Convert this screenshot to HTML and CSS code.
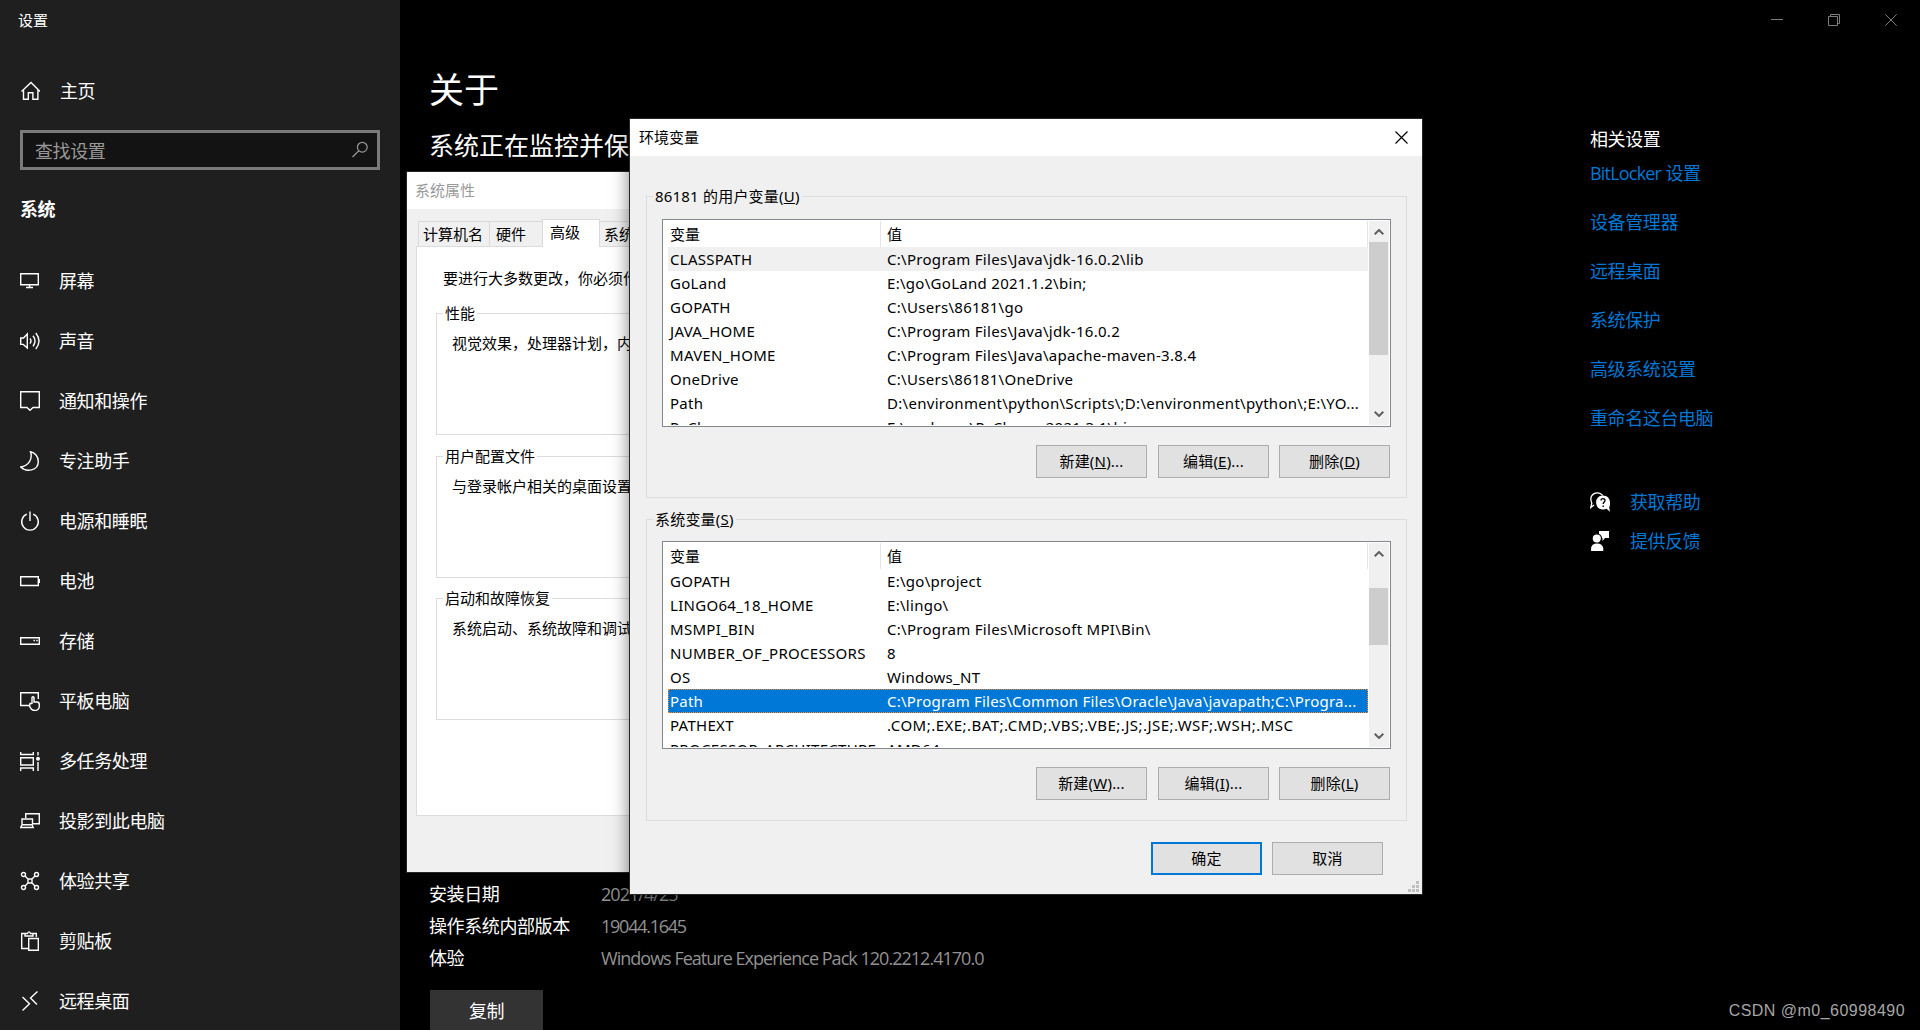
FILE: index.html
```html
<!DOCTYPE html>
<html lang="zh-CN">
<head>
  <meta charset="UTF-8">
  <title>设置</title>
  <link rel="stylesheet" href="styles.css">
</head>
<body>
  <div class="settings">
    <aside class="sidebar">
      <div class="app-title">设置</div>
      <a class="nav-item home">
        <svg class="icon" viewBox="0 0 20 20"><path d="M1.5 10.5L11 1.5l9 9M3.5 9v9.3h4.8v-6.6h4.6v6.6h5V9"/></svg>
        <span>主页</span>
      </a>
      <div class="search">
        <span>查找设置</span>
        <svg class="search-icon" viewBox="0 0 18 18"><circle cx="11.3" cy="6.2" r="4.9"/><path d="M7.8 9.8L1.5 16"/></svg>
      </div>
      <h3>系统</h3>
      <nav>
        <a class="nav-item">
          <svg class="icon" viewBox="0 0 20 20"><path d="M.7 2.7h17.6v11.1H.7zM9.5 14v2.5M6 16.5h7"/></svg>
          <span>屏幕</span>
        </a>
        <a class="nav-item">
          <svg class="icon" viewBox="0 0 20 20"><path d="M.7 7v6.4h2.6l4 3.6V3L3.500 7zM10 7.500q2 2.500 0 5.200M13 4.800q4 5.200 0 10.500M15.800 2q6.400 8 0 16"/></svg>
          <span>声音</span>
        </a>
        <a class="nav-item">
          <svg class="icon" viewBox="0 0 20 20"><path d="M.7.800h18.600v15.700h-6.300l-3 2.800-3-2.800H.7z"/></svg>
          <span>通知和操作</span>
        </a>
        <a class="nav-item">
          <svg class="icon" viewBox="0 0 20 20"><path d="M10.500.800c2.500 7-2 14-9.800 15.200 5.500 5.500 17.600 4 17.600-5.500 0-5-3.500-9-7.800-9.700z"/></svg>
          <span>专注助手</span>
        </a>
        <a class="nav-item">
          <svg class="icon" viewBox="0 0 20 20"><path d="M10 .5V10M6.800 3.200a8.300 8.300 0 1 0 6.400 0"/></svg>
          <span>电源和睡眠</span>
        </a>
        <a class="nav-item">
          <svg class="icon" viewBox="0 0 20 20"><path d="M.7 5.700h17.600v8.800H.7zM19.500 8v4"/></svg>
          <span>电池</span>
        </a>
        <a class="nav-item">
          <svg class="icon" viewBox="0 0 20 20"><path d="M.7 6.700h18.600v6.600H.7zM13.500 9.500H15M16.200 9.500h1.500"/></svg>
          <span>存储</span>
        </a>
        <a class="nav-item">
          <svg class="icon" viewBox="0 0 20 20"><path d="M9 14.500H.7V1.700h17.600V8M12 13V6.500q1-1.500 2 0V11h3q2.300 0 2.300 2.500v2q-.5 4-4.500 4-3.500 0-5.300-4.500l.5-2.500h2"/></svg>
          <span>平板电脑</span>
        </a>
        <a class="nav-item">
          <svg class="icon" viewBox="0 0 20 20"><path d="M.7 1v2.500h12.600V1M.7 6.700h12.600v7.300H.7zM.7 20v-3h12.600v3M18 1v3.500M18 11v9"/><circle class="fill" cx="18" cy="7.800" r="2"/></svg>
          <span>多任务处理</span>
        </a>
        <a class="nav-item">
          <svg class="icon" viewBox="0 0 20 20"><path d="M5.700 7V2.700h13.600v10H13M2 13.500V8h10.500v5.500M.7 16.500l1.300-2.700h10l1.200 2.700z"/></svg>
          <span>投影到此电脑</span>
        </a>
        <a class="nav-item">
          <svg class="icon" viewBox="0 0 20 20"><circle cx="3.500" cy="3.500" r="2"/><circle cx="16.500" cy="3.500" r="2"/><circle cx="3.500" cy="16.500" r="2"/><circle cx="16.500" cy="16.500" r="2"/><path d="M8 8h4v4H8zM5 5l3 3M15 5l-3 3M5 15l3-3M15 15l-3-3"/></svg>
          <span>体验共享</span>
        </a>
        <a class="nav-item">
          <svg class="icon" viewBox="0 0 20 20"><path d="M8 17.500H1.700v-15H5.500M12.500 2.500h3.800V6M5 5V2.500h2.500Q9-.800 10.500 2.500H13V5zM8.700 7.500h9.600v11.800H8.700z"/></svg>
          <span>剪贴板</span>
        </a>
        <a class="nav-item">
          <svg class="icon" viewBox="0 0 20 20"><path d="M2.500 6l7 6.700-7 6.800M17.500.500l-7 6.500 6.500 6.500"/></svg>
          <span>远程桌面</span>
        </a>
      </nav>
    </aside>

    <main class="about">
      <h1>关于</h1>
      <h2>系统正在监控并保</h2>
      <dl class="specs">
        <dt>安装日期</dt><dd class="date">2021/4/25</dd>
        <dt>操作系统内部版本</dt><dd class="build">19044.1645</dd>
        <dt>体验</dt><dd class="pack">Windows Feature Experience Pack 120.2212.4170.0</dd>
      </dl>
      <button class="copy">复制</button>
    </main>

    <section class="related">
      <div class="window-controls">
        <svg viewBox="0 0 12 12"><path d="M0 5.500h12"/></svg>
        <svg viewBox="0 0 12 12"><path d="M.5 2.500h9v9h-9zM2.500 2.500v-2h9v9h-2"/></svg>
        <svg viewBox="0 0 12 12"><path d="M.3.300l11.400 11.400M11.700.300L.3 11.700"/></svg>
      </div>
      <h4>相关设置</h4>
      <ul class="links">
        <li><span class="latin">BitLocker</span> 设置</li>
        <li>设备管理器</li>
        <li>远程桌面</li>
        <li>系统保护</li>
        <li>高级系统设置</li>
        <li>重命名这台电脑</li>
      </ul>
      <div class="help">
        <svg viewBox="0 0 20 20"><path class="outline" d="M4 13L.8 15.500l1-4.500C-1 5 3 .8 7 .8c2.500 0 4.500 1 5.700 2.700"/><path class="solid" d="M13 3.500c-9.500 0-9 14.500.5 14 1.300 0 2.300-.3 3-.7l3.500 3-.8-4.600C21.500 10.500 19.500 3.500 13 3.500z"/><path class="mark" d="M11 8.500c0-2.500 4.200-2.500 4 0 0 1.500-1.800 1.500-1.800 3.500M13.200 13.500v1.500"/></svg>
        <span>获取帮助</span>
      </div>
      <div class="help">
        <svg viewBox="0 0 20 20"><path class="solid" d="M9 0h10v7h-4l-2.500 3V7H9z"/><circle class="head" cx="6.800" cy="7.500" r="4.700"/><path class="solid" d="M1 20v-2.500q.5-5 6-5t6.300 5V20z"/></svg>
        <span>提供反馈</span>
      </div>
    </section>
  </div>

  <!-- 系统属性 -->
  <div class="window props">
    <div class="titlebar"><span>系统属性</span></div>
    <div class="props-body">
      <div class="tabs">
        <div class="tab first">计算机名</div>
        <div class="tab hardware">硬件</div>
        <div class="tab active">高级</div>
        <div class="tab protect">系统</div>
      </div>
      <div class="tab-panel">
        <p>要进行大多数更改，你必须作</p>
        <fieldset>
          <legend>性能</legend>
          视觉效果，处理器计划，内
        </fieldset>
        <fieldset>
          <legend>用户配置文件</legend>
          与登录帐户相关的桌面设置
        </fieldset>
        <fieldset>
          <legend>启动和故障恢复</legend>
          系统启动、系统故障和调试
        </fieldset>
      </div>
    </div>
  </div>

  <!-- 环境变量 -->
  <div class="window env">
    <div class="titlebar">
      <span>环境变量</span>
      <svg class="close" viewBox="0 0 13 13"><path d="M.5.500l12 12M12.500.500l-12 12"/></svg>
    </div>
    <div class="env-body">
      <fieldset>
        <legend>86181 的用户变量(<u>U</u>)</legend>
        <div class="list">
          <div class="table">
            <div class="row head"><span>变量</span><span>值</span></div>
            <div class="row hot"><span>CLASSPATH</span><span>C:\Program Files\Java\jdk-16.0.2\lib</span></div>
            <div class="row"><span>GoLand</span><span>E:\go\GoLand 2021.1.2\bin;</span></div>
            <div class="row"><span>GOPATH</span><span>C:\Users\86181\go</span></div>
            <div class="row"><span>JAVA_HOME</span><span>C:\Program Files\Java\jdk-16.0.2</span></div>
            <div class="row"><span>MAVEN_HOME</span><span>C:\Program Files\Java\apache-maven-3.8.4</span></div>
            <div class="row"><span>OneDrive</span><span>C:\Users\86181\OneDrive</span></div>
            <div class="row"><span>Path</span><span>D:\environment\python\Scripts\;D:\environment\python\;E:\YO...</span></div>
            <div class="row"><span>PyCharm</span><span>E:\pycharm\PyCharm 2021.3.1\bin;</span></div>
          </div>
          <div class="scrollbar">
            <svg viewBox="0 0 10 6"><path d="M.7 5.300L5 1l4.300 4.300"/></svg>
            <div class="thumb user-thumb"></div>
            <svg viewBox="0 0 10 6"><path d="M.7.700L5 5 9.300.700"/></svg>
          </div>
        </div>
        <div class="buttons">
          <button>新建(<u>N</u>)...</button>
          <button>编辑(<u>E</u>)...</button>
          <button>删除(<u>D</u>)</button>
        </div>
      </fieldset>
      <fieldset class="system-vars">
        <legend>系统变量(<u>S</u>)</legend>
        <div class="list">
          <div class="table">
            <div class="row head"><span>变量</span><span>值</span></div>
            <div class="row"><span>GOPATH</span><span>E:\go\project</span></div>
            <div class="row"><span>LINGO64_18_HOME</span><span>E:\lingo\</span></div>
            <div class="row"><span>MSMPI_BIN</span><span>C:\Program Files\Microsoft MPI\Bin\</span></div>
            <div class="row"><span>NUMBER_OF_PROCESSORS</span><span>8</span></div>
            <div class="row"><span>OS</span><span>Windows_NT</span></div>
            <div class="row selected"><span>Path</span><span>C:\Program Files\Common Files\Oracle\Java\javapath;C:\Progra...</span></div>
            <div class="row"><span>PATHEXT</span><span class="extensions">.COM;.EXE;.BAT;.CMD;.VBS;.VBE;.JS;.JSE;.WSF;.WSH;.MSC</span></div>
            <div class="row"><span>PROCESSOR_ARCHITECTURE</span><span>AMD64</span></div>
          </div>
          <div class="scrollbar">
            <svg viewBox="0 0 10 6"><path d="M.7 5.300L5 1l4.300 4.300"/></svg>
            <div class="thumb system-thumb"></div>
            <svg viewBox="0 0 10 6"><path d="M.7.700L5 5 9.300.700"/></svg>
          </div>
        </div>
        <div class="buttons">
          <button>新建(<u>W</u>)...</button>
          <button>编辑(<u>I</u>)...</button>
          <button>删除(<u>L</u>)</button>
        </div>
      </fieldset>
      <div class="actions">
        <button class="default">确定</button>
        <button>取消</button>
      </div>
    </div>
    <svg class="grip" viewBox="0 0 11 11"><path d="M8 0h3v3H8zM4 4h3v3H4zM8 4h3v3H8zM0 8h3v3H0zM4 8h3v3H4zM8 8h3v3H8z"/></svg>
  </div>

  <div class="watermark">CSDN @m0_60998490</div>
</body>
</html>
```

FILE: styles.css
```css
* {
  box-sizing: border-box;
}

body {
  margin: 0;
  width: 1920px;
  height: 1030px;
  overflow: hidden;
  position: relative;
  background: #000;
  color: #fff;
  font-family: "Noto Sans", "Noto Sans CJK SC", sans-serif;
  font-size: 15px;
}

h1, h2, h3, h4, p, ul, dl, dd {
  margin: 0;
  padding: 0;
  font-weight: 400;
}

svg {
  display: block;
  fill: none;
  flex: none;
}

button {
  font: inherit;
  padding: 0;
}

/* 设置 */
.settings {
  display: flex;
  height: 1030px;
  font-family: "Open Sans", "Noto Sans CJK SC", sans-serif;
  font-size: 18px;
  letter-spacing: -0.4px;
}

.sidebar {
  width: 400px;
  background: #1f1f1f;
}

.app-title {
  height: 40px;
  padding-left: 18px;
  line-height: 40px;
  font-size: 15px;
  letter-spacing: 0;
}

.nav-item {
  display: flex;
  align-items: center;
  height: 60px;
  padding-left: 20px;
  gap: 19px;
  line-height: 26px;
}

.home {
  margin-top: 21px;
  gap: 20px;
}

.icon {
  width: 20px;
  height: 20px;
  stroke: #fff;
  stroke-width: 1.4;
}

.icon .fill {
  fill: #fff;
  stroke: none;
}

.search {
  display: flex;
  align-items: center;
  justify-content: space-between;
  width: 360px;
  height: 40px;
  margin: 9px 0 0 20px;
  padding: 0 8px 1px 12px;
  border: 3px solid #7a7a7a;
  background: #131313;
  color: #999;
}

.search-icon {
  width: 18px;
  height: 18px;
  stroke: #999;
  stroke-width: 1.2;
}

.sidebar h3 {
  height: 81px;
  padding: 26px 0 0 20px;
  line-height: 26px;
  font-size: 18px;
  font-weight: 700;
}

.about {
  width: 1190px;
  padding: 65px 0 0 30px;
}

.about h1 {
  height: 50px;
  margin-left: -1px;
  line-height: 50px;
  font-size: 35px;
  letter-spacing: -0.1px;
}

.about h2 {
  height: 36px;
  margin: 13px 0 0 -1px;
  line-height: 35px;
  font-size: 25px;
  letter-spacing: 0;
}

.specs {
  display: grid;
  grid-template-columns: 171px 1fr;
  grid-auto-rows: 32px;
  margin-top: 714px;
  line-height: 32px;
}

.specs dt {
  margin-left: -1px;
}

.specs dd {
  color: #929292;
}

.specs .date {
  letter-spacing: -0.95px;
}

.specs .build {
  letter-spacing: -1.25px;
}

.specs .pack {
  letter-spacing: -0.98px;
}

.copy {
  display: block;
  width: 113px;
  height: 42px;
  margin-top: 16px;
  padding-bottom: 2px;
  border: 0;
  background: #333;
  color: #fff;
  letter-spacing: inherit;
}

.related {
  flex: 1;
}

.window-controls {
  display: flex;
  gap: 45px;
  padding: 14px 0 0 181px;
}

.window-controls svg {
  width: 12px;
  height: 12px;
  stroke: #7d7d7d;
}

.related h4 {
  height: 26px;
  margin-top: 100px;
  line-height: 26px;
  font-size: 18px;
}

.links {
  list-style: none;
  padding-top: 8px;
  height: 330px;
  color: #0078d7;
}

.links li {
  height: 49px;
  line-height: 26px;
}

.links .latin {
  letter-spacing: -0.8px;
}

.help {
  display: flex;
  align-items: center;
  gap: 20px;
  height: 39px;
  line-height: 26px;
  color: #0078d7;
}

.help svg {
  width: 20px;
  height: 20px;
}

.help .outline {
  stroke: #fff;
  stroke-width: 1.3;
}

.help .solid {
  fill: #fff;
}

.help .head {
  fill: #fff;
  stroke: #000;
  stroke-width: 1.2;
}

.help .mark {
  stroke: #000;
  stroke-width: 1.4;
}

/* 对话框 */
.window {
  position: absolute;
  border: 1px solid #262626;
  background: #f0f0f0;
  color: #000;
}

.titlebar {
  display: flex;
  align-items: center;
  justify-content: space-between;
  height: 37px;
  padding: 0 14px 0 9px;
  background: #fff;
}

.titlebar span {
  padding-bottom: 2px;
}

.window fieldset {
  min-width: 0;
  margin: 0;
  padding: 0;
  border: 1px solid #dcdcdc;
}

.window legend {
  height: 20px;
  padding: 0 2px;
  line-height: 20px;
}

.props {
  left: 406px;
  top: 171px;
  width: 524px;
  height: 702px;
}

.props .titlebar {
  padding-left: 8px;
  color: #999;
}

.props-body {
  padding: 10px 9px 0;
}

.tabs {
  display: flex;
  align-items: flex-end;
  height: 27px;
  padding-left: 2px;
}

.tab {
  height: 25px;
  border: 1px solid #d9d9d9;
  border-bottom: 0;
  border-left: 0;
  line-height: 24px;
}

.tab.first {
  width: 72px;
  padding-left: 4px;
  border-left: 1px solid #d9d9d9;
}

.tab.hardware {
  width: 52px;
  padding-left: 6px;
  border-right: 0;
}

.tab.active {
  position: relative;
  width: 58px;
  height: 28px;
  margin-bottom: -1px;
  padding-left: 7px;
  border-left: 1px solid #d9d9d9;
  background: #fff;
  line-height: 24px;
}

.tab.protect {
  width: 80px;
  padding-left: 4px;
}

.tab-panel {
  height: 570px;
  padding: 20px 19px 0;
  border: 1px solid #dcdcdc;
  background: #fff;
}

.tab-panel p {
  height: 36px;
  padding-left: 7px;
  line-height: 22px;
}

.tab-panel fieldset {
  height: 132px;
  margin-bottom: 11px;
  padding: 9px 0 0 15px;
  line-height: 22px;
  white-space: nowrap;
}

.tab-panel fieldset:last-child {
  margin-top: -1px;
}

.tab-panel legend {
  margin-left: -9px;
}

.env {
  left: 629px;
  top: 118px;
  width: 794px;
  height: 777px;
  box-shadow: 0 3px 16px rgba(0, 0, 0, 0.5);
}

.close {
  width: 13px;
  height: 13px;
  stroke: #000;
  stroke-width: 1.2;
}

.env-body {
  padding: 30px 15px 0 16px;
}

.env fieldset {
  height: 312px;
  margin-bottom: 11px;
  padding: 13px 15px 0;
}

.env fieldset.system-vars {
  padding-top: 12px;
}

.env legend {
  margin-left: -9px;
  letter-spacing: 0.2px;
}

.list {
  display: flex;
  height: 208px;
  padding: 1px 1px 1px 5px;
  border: 1px solid #828790;
  background: #fff;
}

.table {
  width: 700px;
  height: 204px;
  overflow: hidden;
}

.row {
  display: flex;
  height: 24px;
  line-height: 24px;
  letter-spacing: 0.29px;
  white-space: nowrap;
}

.row span {
  padding-left: 2px;
}

.row span:first-child {
  width: 217px;
  flex: none;
}

.row.head {
  height: 26px;
  line-height: 27px;
  letter-spacing: 0;
}

.row.head span:first-child {
  width: 213px;
  border-right: 1px solid #e5e5e5;
}

.row.head span:last-child {
  flex: 1;
  padding-left: 6px;
  border-right: 1px solid #e5e5e5;
}

.row.hot {
  background: #f0f0f0;
}

.row.selected {
  background: #0078d7;
  color: #fff;
  letter-spacing: 0.22px;
  outline: 1px dotted #ff8728;
  outline-offset: -1px;
}

.row .extensions {
  letter-spacing: 0.47px;
}

.scrollbar {
  display: flex;
  flex-direction: column;
  align-items: center;
  justify-content: space-between;
  width: 20px;
  height: 204px;
  margin-left: 1px;
  padding: 8px 1px 8px 0;
  background: #f0f0f0;
}

.scrollbar svg {
  width: 10px;
  height: 6px;
  stroke: #606060;
  stroke-width: 2;
}

.thumb {
  width: 19px;
  background: #cdcdcd;
}

.user-thumb {
  height: 113px;
  margin: 7px 0 auto;
}

.system-thumb {
  height: 57px;
  margin: 31px 0 auto;
}

.buttons,
.actions {
  display: flex;
  justify-content: flex-end;
  gap: 10px;
}

.buttons {
  margin: 18px 1px 0 0;
}

.buttons button:first-child {
  margin-right: 1px;
}

.actions {
  padding: 10px 24px 0 0;
}

.window button {
  width: 111px;
  height: 33px;
  padding-bottom: 2px;
  border: 1px solid #adadad;
  background: #e1e1e1;
  color: #000;
  letter-spacing: 0.2px;
}

.window button.default {
  border: 2px solid #0078d7;
}

.grip {
  position: absolute;
  right: 3px;
  bottom: 2px;
  width: 11px;
  height: 11px;
  fill: #bfbfbf;
}

.watermark {
  position: absolute;
  right: 15px;
  bottom: 8px;
  color: #a6a6a6;
  font-family: "Liberation Sans", sans-serif;
  font-size: 16px;
  line-height: 22px;
  letter-spacing: 0.47px;
}
```
